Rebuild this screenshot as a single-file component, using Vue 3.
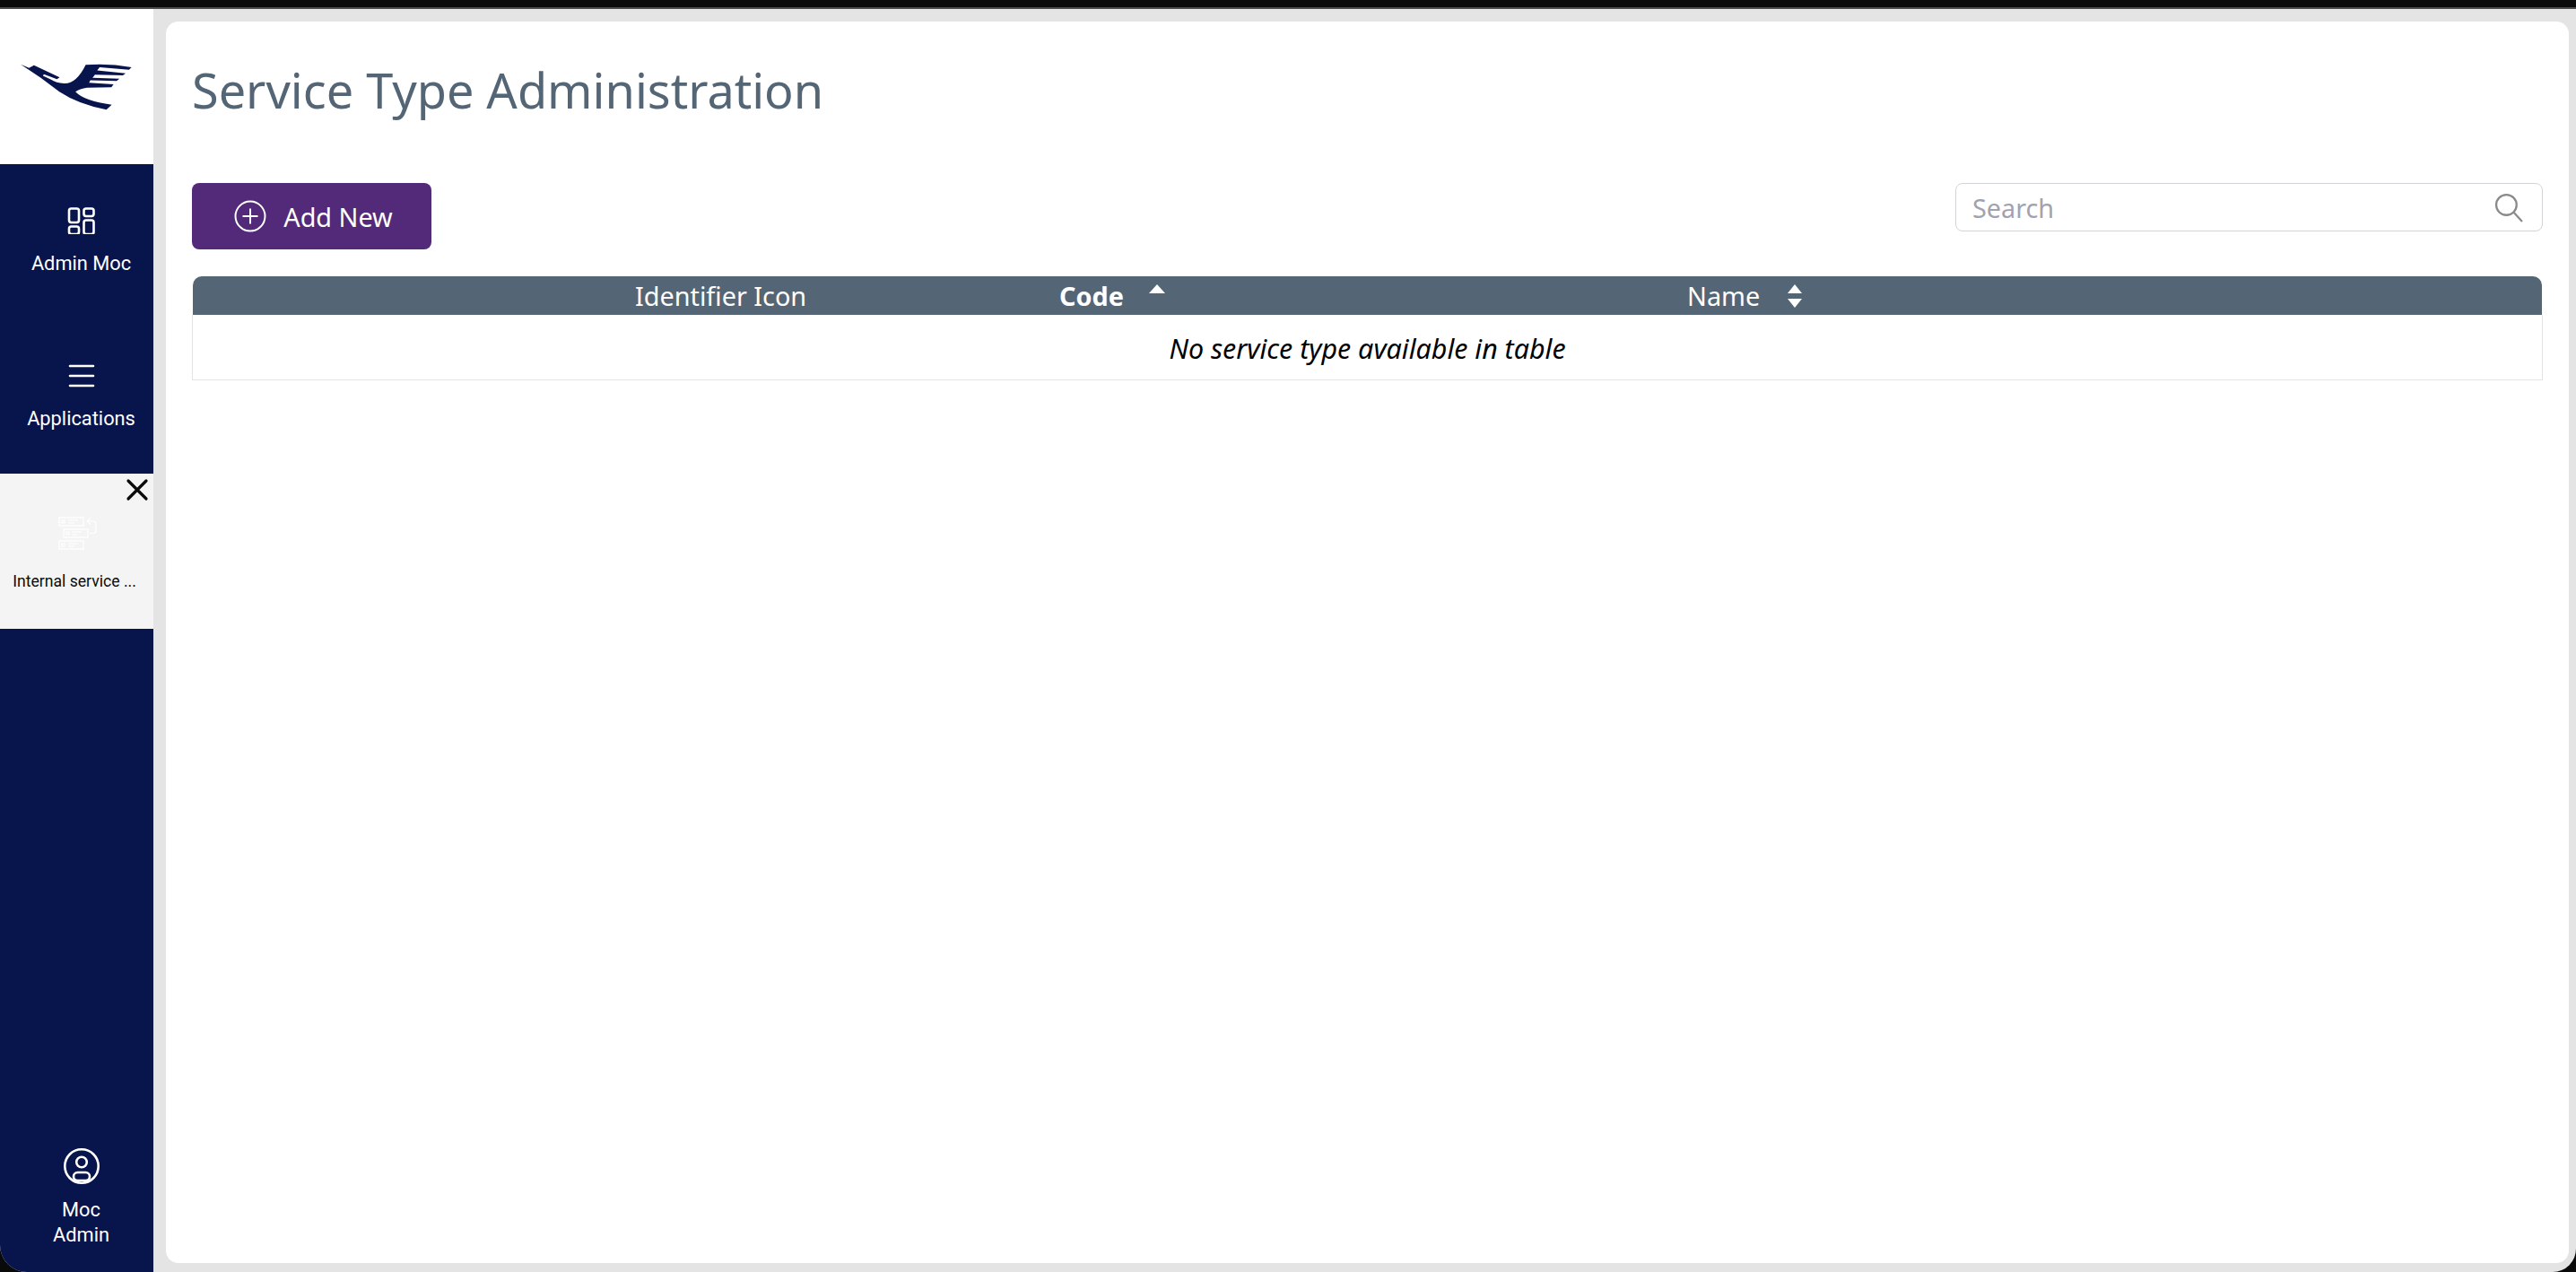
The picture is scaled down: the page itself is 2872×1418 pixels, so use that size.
<script setup>
const columns = [
  { label: 'Identifier Icon', sort: null },
  { label: 'Code', sort: 'asc' },
  { label: 'Name', sort: 'both' }
]
</script>

<template>
  <div class="window">
    <div class="screen">
      <aside class="sidebar">
        <div class="logo">
          <svg width="126" height="54" viewBox="72 212 365 155" aria-label="Logo">
            <path fill="#08144c" d="M75 216 L102 228 L118 219 L201 258 L192 264 L150 248 L147 253 L172 265 Q190 277 215 278 Q255 280 285 218 Q360 212 433 226 L425 234 L330 226 L322 236 L414 245 L405 252 L315 250 L307 260 L394 263 L385 270 L300 268 L296 276 L375 281 L368 290 L290 292 Q265 296 252 305 Q280 335 369 347 L352 363 Q260 345 200 305 L140 260 Z" />
          </svg>
        </div>
        <div class="nav-item">
          <svg class="nav-icon" width="32" height="32" viewBox="0 -1.500 32 32" fill="none" stroke="#fff" stroke-width="2.6">
            <rect x="2" y="2" width="11" height="15.500" rx="2.400" />
            <rect x="18.500" y="2" width="11" height="8.500" rx="2.400" />
            <rect x="2" y="22" width="11" height="8.500" rx="2.400" />
            <rect x="18.500" y="15" width="11" height="15.500" rx="2.400" />
          </svg>
          <span>Admin Moc</span>
        </div>
        <div class="nav-item">
          <svg class="nav-icon" width="32" height="32" viewBox="0 0 32 32" fill="none" stroke="#fff" stroke-width="2.6" stroke-linecap="round">
            <path d="M3 6h26M3 17h26M3 28h26" />
          </svg>
          <span>Applications</span>
        </div>
        <div class="nav-item active">
          <svg class="close" width="26" height="26" viewBox="0 0 26 26" fill="none" stroke="#0b0b0b" stroke-width="3.200" stroke-linecap="round">
            <path d="M3 3l20 20M23 3L3 23" />
          </svg>
          <svg class="app-icon" width="44" height="38" viewBox="0 0 44 38" fill="none" stroke="#fff" stroke-width="1.200">
            <rect x="1" y="1" width="27" height="9" />
            <rect x="6" y="14" width="27" height="9" />
            <rect x="1" y="27" width="27" height="9" />
            <path d="M4 4h3v3H4zM11 4h11M11 7h7M9 17h3v3H9zM15 17h11M15 20h7M4 30h3v3H4zM11 30h11M11 33h7" />
            <path d="M35 18.500h3q4 0 4-4V9q0-4-4-4h-6M36 1.500L32 5l4 3.500" />
          </svg>
          <span class="app-label">Internal service ...</span>
        </div>
        <div class="user">
          <svg width="42" height="42" viewBox="0 0 42 42" fill="none" stroke="#fff" stroke-width="2.6">
            <circle cx="21" cy="21" r="18.700" />
            <circle cx="21" cy="16.500" r="5.800" />
            <rect x="12" y="28" width="18" height="9" rx="4.500" />
          </svg>
          <span>Moc<br />Admin</span>
        </div>
      </aside>

      <main class="card">
        <h1>Service Type Administration</h1>
        <div class="toolbar">
          <button class="add" type="button">
            <svg width="36" height="36" viewBox="0 0 36 36" fill="none" stroke="#fff" stroke-width="2">
              <circle cx="18" cy="18" r="16.500" />
              <path d="M18 9.500v17M9.500 18h17" />
            </svg>
            <span>Add New</span>
          </button>
          <div class="search">
            <input type="text" placeholder="Search" />
            <svg width="33" height="33" viewBox="0 0 32 32" fill="none" stroke="#8a8a8a" stroke-width="2.200">
              <circle cx="13" cy="13" r="11" />
              <path d="M21 21l9 10" />
            </svg>
          </div>
        </div>

        <div class="table">
          <div class="thead">
            <div v-for="col in columns" :key="col.label" class="th" :class="{ sorted: col.sort === 'asc' }">
              <span>{{ col.label }}</span>
              <svg v-if="col.sort === 'asc'" class="sort up" width="18" height="10" viewBox="0 0 18 10">
                <path fill="#fff" d="M9 0l9 10H0z" />
              </svg>
              <svg v-if="col.sort === 'both'" class="sort both" width="18" height="28" viewBox="0 0 18 28">
                <path fill="#fff" d="M9 1l8 10H1zM9 27L1 17h16z" />
              </svg>
            </div>
          </div>
          <div class="empty">No service type available in table</div>
        </div>
      </main>
    </div>
  </div>
</template>

<style>
html, body { margin: 0; padding: 0; overflow: hidden; background: #0a0a0a; }
</style>

<style scoped>
.window {
  width: 2872px;
  height: 1418px;
  padding-top: 8px;
  box-sizing: border-box;
  background: #0a0a0a;
}
.screen {
  height: 1410px;
  box-sizing: border-box;
  border-top: 2px solid #4a4a4a;
  border-radius: 0 0 26px 30px;
  overflow: hidden;
  background: #e4e4e4;
  display: flex;
  padding-right: 8px;
}
.sidebar {
  width: 171px;
  flex: none;
  background: #08144c;
  color: #fff;
  display: flex;
  flex-direction: column;
  font-family: Roboto, sans-serif;
  font-size: 21.800px;
}
.logo {
  height: 173px;
  background: #fff;
  display: flex;
  align-items: center;
  justify-content: center;
  padding-right: 2px;
  box-sizing: border-box;
}
.nav-item {
  position: relative;
  height: 172.500px;
  display: flex;
  flex-direction: column;
  align-items: center;
  padding-top: 46px;
  box-sizing: border-box;
  padding-left: 10px;
}
.nav-item span { margin-top: 20px; line-height: 26px; white-space: nowrap; }
.active {
  background: #f4f4f4;
  color: #0b0b0b;
  padding-left: 0;
  padding-right: 5px;
}
.close { position: absolute; top: 5px; right: 5px; }
.app-icon { margin-top: 2px; margin-left: 7px; }
.active .app-label { font-size: 17.600px; margin-top: 21px; }
.user {
  margin-top: auto;
  padding: 0 0 27px 10px;
  display: flex;
  flex-direction: column;
  align-items: center;
  text-align: center;
  line-height: 28px;
}
.user span { margin-top: 14px; }
.card {
  flex: 1;
  margin: 14px 0 10px 14px;
  background: #fff;
  border-radius: 14px;
  padding: 0 29px;
  min-width: 0;
}
h1 {
  margin: 0;
  padding-top: 38px;
  height: 180px;
  box-sizing: border-box;
  font-family: "Noto Sans", sans-serif;
  font-weight: 400;
  font-size: 54px;
  line-height: 76px;
  color: #546676;
}
.toolbar {
  display: flex;
  justify-content: space-between;
  align-items: flex-start;
  height: 104px;
}
.add {
  width: 267px;
  height: 74px;
  background: #532a79;
  border: 0;
  border-radius: 8px;
  color: #fff;
  font-family: "Noto Sans", sans-serif;
  font-size: 28.800px;
  display: flex;
  align-items: center;
  justify-content: center;
  gap: 19px;
  padding: 0 0 0 4px;
}
.search {
  width: 655px;
  height: 54px;
  box-sizing: border-box;
  border: 1px solid #d4d4d8;
  border-radius: 8px;
  display: flex;
  align-items: center;
  padding: 0 20px 0 18px;
}
.search input {
  flex: 1;
  min-width: 0;
  border: 0;
  outline: 0;
  padding: 0;
  background: transparent;
  font-family: "Noto Sans", sans-serif;
  font-size: 28.800px;
}
.search input::placeholder { color: #a0a3af; opacity: 1; }
.table { width: 100%; }
.thead {
  height: 43px;
  margin: 0 1px;
  background: #546676;
  border-radius: 10px 10px 0 0;
  display: grid;
  grid-template-columns: 473px 700px 1fr;
  padding-left: 493px;
  align-items: center;
  color: #fff;
  font-family: "Noto Sans", sans-serif;
  font-size: 28.800px;
  line-height: 38px;
}
.th { display: flex; align-items: center; position: relative; }
.sorted { font-weight: 700; }
.sort { margin-left: 28px; }
.sort.both { margin-left: 30px; }
.sort.up { margin-top: -16px; }
.empty {
  height: 73px;
  box-sizing: border-box;
  border: 1px solid #e4e4e4;
  border-top: 0;
  padding-top: 2px;
  display: flex;
  align-items: center;
  justify-content: center;
  color: #000;
  font-family: "Noto Sans", sans-serif;
  font-style: italic;
  font-size: 30.400px;
}
</style>
